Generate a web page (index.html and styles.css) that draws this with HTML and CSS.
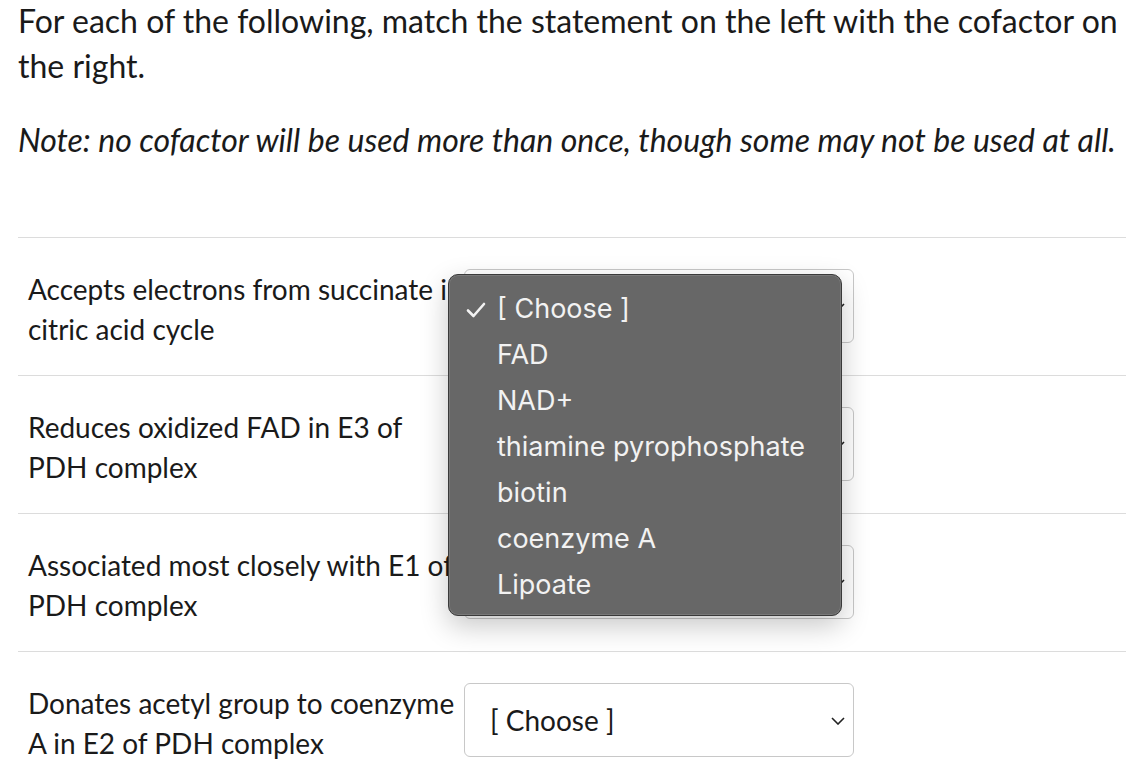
FILE: index.html
```html
<!DOCTYPE html>
<html lang="en">
<head>
<meta charset="UTF-8" />
<title>Matching question</title>
<link rel="stylesheet" href="styles.css">
</head>
<body>

<div class="question">
    <p class="intro">For each of the following, match the statement on the left with the cofactor on the right.</p>
    <p class="note">Note: no cofactor will be used more than once, though some may not be used at all.</p>

    <div class="matches">
        <div class="match-row">
            <div class="statement">Accepts electrons from succinate in citric acid cycle</div>
            <div class="select-box">
                <span>[ Choose ]</span>
                <svg class="chevron" width="14" height="8" viewBox="0 0 14 8"><polyline points="1,1 7,7 13,1" fill="none" stroke="#222" stroke-width="1.6"/></svg>
            </div>
        </div>
        <div class="match-row">
            <div class="statement">Reduces oxidized FAD in E3 of PDH complex</div>
            <div class="select-box">
                <span>[ Choose ]</span>
                <svg class="chevron" width="14" height="8" viewBox="0 0 14 8"><polyline points="1,1 7,7 13,1" fill="none" stroke="#222" stroke-width="1.6"/></svg>
            </div>
        </div>
        <div class="match-row">
            <div class="statement">Associated most closely with E1 of PDH complex</div>
            <div class="select-box">
                <span>[ Choose ]</span>
                <svg class="chevron" width="14" height="8" viewBox="0 0 14 8"><polyline points="1,1 7,7 13,1" fill="none" stroke="#222" stroke-width="1.6"/></svg>
            </div>
        </div>
        <div class="match-row">
            <div class="statement">Donates acetyl group to coenzyme A in E2 of PDH complex</div>
            <div class="select-box">
                <span>[ Choose ]</span>
                <svg class="chevron" width="14" height="8" viewBox="0 0 14 8"><polyline points="1,1 7,7 13,1" fill="none" stroke="#222" stroke-width="1.6"/></svg>
            </div>
        </div>
    </div>

    <!-- menu ouvert du premier select -->
    <ul class="option-menu">
        <li class="selected"><svg class="check" width="20" height="16" viewBox="0 0 20 16"><polyline points="2,8.5 7.5,14 18,2" fill="none" stroke="#f2f2f2" stroke-width="2.6" stroke-linecap="round" stroke-linejoin="round"/></svg>[ Choose ]</li>
        <li>FAD</li>
        <li>NAD+</li>
        <li>thiamine pyrophosphate</li>
        <li>biotin</li>
        <li>coenzyme A</li>
        <li>Lipoate</li>
    </ul>
</div>

</body>
</html>
```

FILE: styles.css
```css
body {
    margin: 0;
    padding: 0;
    background-color: #ffffff;
    color: #1a1a1a;
    font-family: Lato, 'Liberation Sans', sans-serif;
}

.question {
    position: relative;
    padding: 0 10px 0 18px;
}

.intro {
    margin: -2px 0 0 0;
    font-size: 32px;
    line-height: 45px;
}

.note {
    margin: 29px 0 0 0;
    font-size: 32px;
    line-height: 45px;
    font-style: italic;
}

.matches {
    margin-top: 75px;
}

.match-row {
    display: flex;
    align-items: flex-start;
    border-top: 1px solid #dcdcdc;
    padding: 31px 0 26px 10px;
}

.statement {
    flex: 0 0 436px;
    font-size: 28px;
    line-height: 40px;
}

.select-box {
    width: 355px;
    height: 72px;
    border: 1px solid #c8c8c8;
    border-radius: 6px;
    display: flex;
    align-items: center;
    justify-content: space-between;
    padding: 0 8px 0 25px;
    font-size: 28px;
    color: #1a1a1a;
}

.chevron {
    margin-top: 2px;
}

/* Menu déroulant */
.option-menu {
    position: absolute;
    left: 448px;
    top: 276px;
    width: 392px;
    height: 329px;
    margin: 0;
    padding: 11px 0 0 0;
    list-style: none;
    background-color: #676767;
    border: 1px solid #3a3a3a;
    border-radius: 10px;
    box-shadow: 0 10px 28px rgba(0, 0, 0, 0.22), inset 0 0 0 1px rgba(255, 255, 255, 0.12);
    font-family: Inter, 'Liberation Sans', sans-serif;
    font-size: 27px;
    color: #f2f2f2;
}

.option-menu li {
    position: relative;
    height: 46px;
    line-height: 46px;
    padding-left: 48px;
}

.option-menu .check {
    position: absolute;
    left: 17px;
    top: 16px;
}
```
